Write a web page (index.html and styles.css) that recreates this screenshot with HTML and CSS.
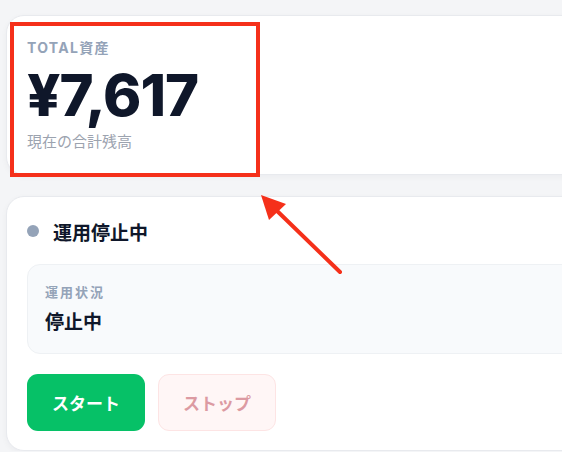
FILE: index.html
```html
<!DOCTYPE html>
<html lang="ja">
<head>
    <meta charset="UTF-8">
    <meta name="viewport" content="width=device-width, initial-scale=1.0">
    <title>運用ダッシュボード</title>
    <link rel="stylesheet" href="styles.css">
</head>
<body>
    <div class="page">
        <!-- 合計残高 -->
        <section class="card total-card">
            <div class="total-label">TOTAL資産</div>
            <div class="total-amount">¥7,617</div>
            <div class="total-sub">現在の合計残高</div>
        </section>

        <!-- 運用ステータス -->
        <section class="card status-card">
            <div class="status-head">
                <span class="status-dot"></span>
                <h2 class="status-title">運用停止中</h2>
            </div>
            <div class="status-box">
                <div class="status-label">運用状況</div>
                <div class="status-value">停止中</div>
            </div>
            <div class="actions">
                <button class="btn btn-start">スタート</button>
                <button class="btn btn-stop">ストップ</button>
            </div>
        </section>
    </div>

    <!-- 注釈 -->
    <div class="mark-box"></div>
    <svg class="mark-arrow" width="562" height="452" viewBox="0 0 562 452">
        <line x1="340" y1="272" x2="272" y2="206" stroke="#f5301a" stroke-width="4" stroke-linecap="round"/>
        <polygon points="261,195 286,204 269,220" fill="#f5301a"/>
    </svg>
</body>
</html>
```

FILE: styles.css
```css
body {
    margin: 0;
    padding: 0;
    background-color: #f4f5f7;
    font-family: Inter, "Noto Sans CJK JP", sans-serif;
    color: #0f172a;
    overflow: hidden;
}
.page {
    width: 640px;
    padding: 15px 0 0 6px;
    display: flex;
    flex-direction: column;
    gap: 21px;
}
.card {
    background-color: #fff;
    border: 1px solid #e8eaee;
    border-radius: 18px;
    box-shadow: 0 2px 6px rgba(15, 23, 42, 0.04);
}
.total-card {
    height: 160px;
    box-sizing: border-box;
    padding: 23px 20px 0 20px;
}
.total-label {
    font-size: 14px;
    line-height: 18px;
    font-weight: 700;
    letter-spacing: 1.3px;
    color: #94a3b8;
}
.total-amount {
    font-size: 58px;
    line-height: 64px;
    font-weight: 800;
    letter-spacing: -1px;
    margin-top: 6px;
}
.total-sub {
    font-size: 15px;
    line-height: 20px;
    color: #9ca3af;
    margin-top: 5px;
}
.status-card {
    padding: 20px 20px 19px 20px;
}
.status-head {
    display: flex;
    align-items: center;
    gap: 14px;
    height: 28px;
}
.status-dot {
    width: 12px;
    height: 12px;
    border-radius: 50%;
    background-color: #94a3b8;
}
.status-title {
    margin: 0;
    font-size: 19px;
    font-weight: 700;
}
.status-box {
    margin-top: 19px;
    background-color: #f8fafc;
    border: 1px solid #eef1f4;
    border-radius: 13px;
    padding: 18px 18px 17px 17px;
}
.status-label {
    font-size: 13px;
    line-height: 18px;
    font-weight: 700;
    letter-spacing: 2px;
    color: #94a3b8;
}
.status-value {
    font-size: 19px;
    line-height: 26px;
    font-weight: 700;
    margin-top: 9px;
}
.actions {
    display: flex;
    gap: 13px;
    margin-top: 20px;
}
.btn {
    width: 118px;
    height: 57px;
    border-radius: 11px;
    font-family: Inter, "Noto Sans CJK JP", sans-serif;
    font-size: 17px;
    font-weight: 700;
    cursor: pointer;
}
.btn-start {
    background-color: #06c167;
    border: none;
    color: #fff;
}
.btn-stop {
    background-color: #fff6f6;
    border: 1px solid #fde4e4;
    color: #dc9aa2;
}
.mark-box {
    position: absolute;
    left: 10px;
    top: 22px;
    width: 242px;
    height: 147px;
    border: 4px solid #f5301a;
}
.mark-arrow {
    position: absolute;
    left: 0;
    top: 0;
    pointer-events: none;
}
```
